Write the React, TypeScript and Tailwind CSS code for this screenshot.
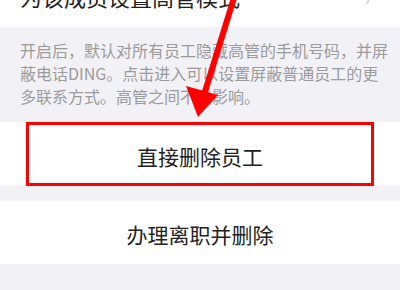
const font = { fontFamily: '"Noto Sans CJK SC", "Noto Sans", sans-serif' };

const App = () => {
  return (
    <div className="relative w-[400px] h-[290px] overflow-hidden bg-[#f2f2f6]" style={font}>
      {/* top row, scrolled half out of view */}
      <div className="h-[27px] overflow-hidden bg-white flex justify-between pl-[20px] pr-[30px]">
        <div className="-mt-[18px] text-[22px] leading-[28px] text-[#1f1f1f] whitespace-nowrap">
          为该成员设置高管模式
        </div>
        <div className="-mt-[12px] text-[18px] leading-[20px] text-[#c8c8c8]">›</div>
      </div>

      <div className="h-[95px] pt-[12px] pl-[20px] text-[16px] leading-[23px] text-[#9b9b9b] whitespace-nowrap">
        开启后，默认对所有员工隐藏高管的手机号码，并屏
        <br />
        蔽电话DING。点击进入可以设置屏蔽普通员工的更
        <br />
        多联系方式。高管之间不受影响。
      </div>

      <div className="h-[63px] bg-white">
        <div className="mx-[26px] h-[64px] border-[3px] border-[#ff0000] flex items-center justify-center pt-[5px] text-[21px] text-[#222]">
          直接删除员工
        </div>
      </div>

      <div className="h-[16px]" />

      <div className="h-[63px] bg-white flex items-center justify-center pt-[4px] text-[21px] text-[#222]">
        办理离职并删除
      </div>

      {/* red annotation arrow */}
      <svg className="absolute left-0 top-0" width="400" height="130" viewBox="0 0 400 130">
        <line x1="234" y1="-2" x2="204" y2="95" stroke="#ff0000" strokeWidth="6" strokeLinecap="round" />
        <polygon points="186,86 218,95 198,117" fill="#ff0000" />
      </svg>
    </div>
  );
};

export default App;
